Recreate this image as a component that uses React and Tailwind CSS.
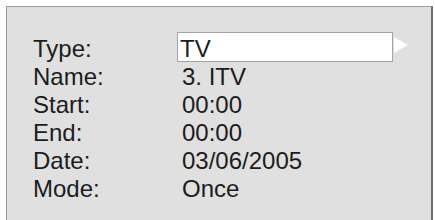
const rows = [
  { label: "Type:", value: "TV", boxed: true },
  { label: "Name:", value: "3. ITV" },
  { label: "Start:", value: "00:00" },
  { label: "End:", value: "00:00" },
  { label: "Date:", value: "03/06/2005" },
  { label: "Mode:", value: "Once" },
];

const App = () => {
  return (
    <div
      className="w-[435px] h-[220px] overflow-hidden bg-white pt-[6px] pl-[6px]"
      style={{ fontFamily: '"Liberation Sans", Arial, sans-serif' }}
    >
      {/* Panel */}
      <div className="w-[427px] h-[240px] bg-[#e0e0e0] border-l border-t border-[#9c9c9c] border-r-2 border-r-[#6e6e6e] pt-[28px] pl-[26px]">
        <div className="grid grid-cols-[144px_1fr] auto-rows-[28px] text-[24px] leading-[28px] text-[#1c1c1c]">
          {rows.map((row) => (
            <div key={row.label} className="contents">
              <div className="whitespace-nowrap">{row.label}</div>
              {row.boxed ? (
                <div className="flex items-start">
                  <div className="-mt-[3px] h-[30px] w-[216px] bg-white border border-[#a4a4a4] pl-[2px] pt-[2px] leading-[28px] whitespace-nowrap">
                    {row.value}
                  </div>
                  <svg
                    width="14"
                    height="16"
                    viewBox="0 0 14 16"
                    className="ml-[1px] mt-[2px]"
                  >
                    <polygon points="0,0 14,8 0,16" fill="#ffffff" />
                  </svg>
                </div>
              ) : (
                <div className="pl-[5px] whitespace-nowrap">{row.value}</div>
              )}
            </div>
          ))}
        </div>
      </div>
    </div>
  );
};

export default App;
